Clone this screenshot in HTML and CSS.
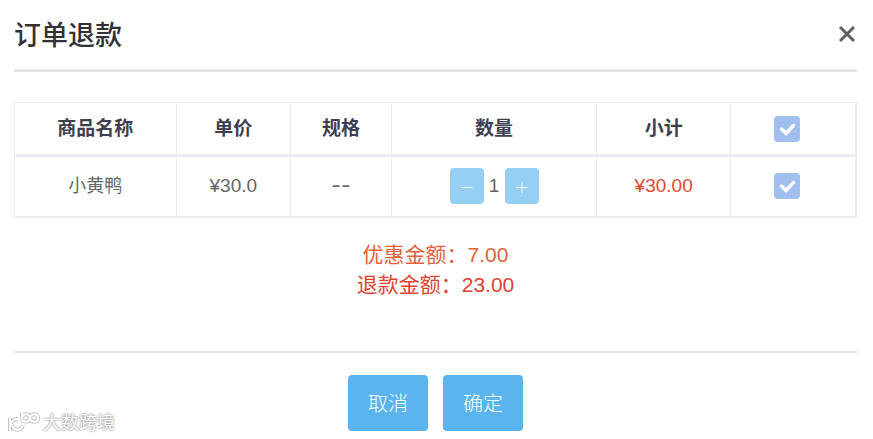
FILE: index.html
```html
<!DOCTYPE html>
<html lang="zh-CN">
<head>
    <meta charset="UTF-8">
    <meta name="viewport" content="width=device-width, initial-scale=1.0">
    <title>订单退款</title>
    <link rel="stylesheet" href="styles.css">
</head>
<body>
    <div class="dialog">
        <header class="dialog-header">
            <h1>订单退款</h1>
            <button type="button" class="close-button" aria-label="关闭">
                <svg width="20" height="20" viewBox="0 0 20 20"><path d="M3 3L17 17M17 3L3 17"/></svg>
            </button>
        </header>

        <table class="goods-table">
            <colgroup>
                <col class="col-name">
                <col class="col-price">
                <col class="col-spec">
                <col class="col-count">
                <col class="col-total">
                <col class="col-check">
            </colgroup>
            <thead>
                <tr>
                    <th>商品名称</th>
                    <th>单价</th>
                    <th>规格</th>
                    <th>数量</th>
                    <th>小计</th>
                    <th><input type="checkbox" id="checkAll" class="check" aria-label="全选" checked></th>
                </tr>
            </thead>
            <tbody>
                <tr>
                    <td class="name">小黄鸭</td>
                    <td>¥30.0</td>
                    <td class="spec">--</td>
                    <td>
                        <div class="stepper">
                            <button type="button" class="step-button" aria-label="减少">
                                <svg width="12" height="12" viewBox="0 0 12 12"><path d="M0.5 6.5H11.5"/></svg>
                            </button>
                            <span class="count">1</span>
                            <button type="button" class="step-button" aria-label="增加">
                                <svg width="12" height="12" viewBox="0 0 12 12"><path d="M0.5 6.5H11.5M6 1V12"/></svg>
                            </button>
                        </div>
                    </td>
                    <td class="total">¥30.00</td>
                    <td><input type="checkbox" class="check" aria-label="选择小黄鸭" checked></td>
                </tr>
            </tbody>
        </table>

        <div class="summary">
            <p class="discount">优惠金额：7.00</p>
            <p class="refund">退款金额：23.00</p>
        </div>

        <footer class="dialog-footer">
            <button type="button" class="action-button">取消</button>
            <button type="button" class="action-button">确定</button>
        </footer>
    </div>

    <div class="watermark">
        <svg width="34" height="24" viewBox="0 0 34 24">
            <g class="mark-shadow">
                <path d="M3 7V20M3 14C4 10 7 8 11 8M5 13C6 20 14 21 16 14"/>
                <path d="M15 2V7C15 12 22 12 23 7C24 2 31 2 31 7C31 12 24 12 23 7C22 2 16 2 15 7"/>
            </g>
            <g class="mark-line">
                <path d="M3 7V20M3 14C4 10 7 8 11 8M5 13C6 20 14 21 16 14"/>
                <path d="M15 2V7C15 12 22 12 23 7C24 2 31 2 31 7C31 12 24 12 23 7C22 2 16 2 15 7"/>
            </g>
        </svg>
        <span>大数跨境</span>
    </div>

    <script>
        const checkAll = document.getElementById('checkAll');
        const rowChecks = document.querySelectorAll('tbody .check');

        checkAll.addEventListener('change', function () {
            rowChecks.forEach(item => {
                item.checked = checkAll.checked;
            });
        });
    </script>
</body>
</html>
```

FILE: styles.css
```css
* {
    box-sizing: border-box;
}
body {
    margin: 0;
    background-color: #fff;
    color: #666;
    font-family: "Liberation Sans", "Noto Sans CJK SC", sans-serif;
}
button {
    padding: 0;
    border: none;
    font-family: inherit;
    cursor: pointer;
}
.dialog {
    padding: 0 16px 8px 14px;
}
.dialog-header {
    display: flex;
    align-items: center;
    justify-content: space-between;
    height: 72px;
    padding-bottom: 2px;
    border-bottom: 3px solid #e5e5e5;
}
h1 {
    margin: 0;
    font-size: 27px;
    font-weight: 500;
    color: #303238;
}
.close-button {
    display: flex;
    background: none;
}
.close-button path {
    fill: none;
    stroke: #606060;
    stroke-width: 3;
}
.goods-table {
    width: 100%;
    margin-top: 30px;
    table-layout: fixed;
    border-collapse: collapse;
    font-size: 19px;
    line-height: 24px;
    text-align: center;
}
.col-name {
    width: 19.2%;
}
.col-price {
    width: 13.6%;
}
.col-spec {
    width: 12%;
}
.col-count {
    width: 24.4%;
}
.col-total {
    width: 15.9%;
}
.col-check {
    width: 14.9%;
}
.goods-table th,
.goods-table td {
    padding: 0;
    border: 1px solid #e9eef0;
}
.goods-table th {
    height: 53px;
    border-bottom: 3px solid #e9edf1;
    color: #3d3f50;
    font-weight: bold;
}
.goods-table td {
    height: 61px;
    border-bottom: 2px solid #edf0f1;
}
.goods-table tr > :last-child {
    padding-right: 12px;
    border-right: 2px solid #e9eef0;
}
.goods-table .name {
    font-size: 18px;
}
.goods-table .spec {
    font-family: Inter, sans-serif;
    font-size: 21px;
}
.goods-table .total {
    color: #e0482f;
}
.check {
    display: block;
    width: 26px;
    height: 26px;
    margin: 0 auto;
    appearance: none;
    border-radius: 4px;
    background-color: #a0bfef;
    cursor: pointer;
}
.check:checked {
    background-image: url("data:image/svg+xml,%3Csvg xmlns='http://www.w3.org/2000/svg' viewBox='0 0 26 26'%3E%3Cpath d='M7.5 13L12 17.5L19.5 9.5' fill='none' stroke='white' stroke-width='3.5' stroke-linecap='round'/%3E%3C/svg%3E");
}
.stepper {
    display: flex;
    align-items: center;
    justify-content: center;
}
.count {
    width: 21px;
}
.step-button {
    display: flex;
    align-items: center;
    justify-content: center;
    width: 34px;
    height: 36px;
    padding-top: 2px;
    border-radius: 4px;
    background-color: #95cff4;
}
.step-button path {
    fill: none;
    stroke: #fff;
    stroke-width: 1;
}
.summary {
    margin-top: 22px;
    font-size: 21px;
    line-height: 30px;
    text-align: center;
}
.summary p {
    margin: 0;
}
.discount {
    color: #e2613b;
}
.refund {
    color: #df422f;
}
.dialog-footer {
    display: flex;
    justify-content: center;
    gap: 15px;
    margin-top: 51px;
    padding-top: 22px;
    border-top: 2px solid #e6e6e6;
}
.action-button {
    width: 80px;
    height: 56px;
    border-radius: 4px;
    background-color: #5ab5ee;
    color: #fff;
    font-size: 20px;
    font-weight: 300;
}
.watermark {
    position: absolute;
    left: 7px;
    bottom: 4px;
    display: flex;
    align-items: center;
    gap: 2px;
    color: #fff;
    font-size: 18px;
    line-height: 24px;
    text-shadow: 0 0 2px #888, 0 0 2px #aaa;
}
.watermark path {
    fill: none;
}
.mark-shadow {
    stroke: #c4c4c4;
    stroke-width: 4;
}
.mark-line {
    stroke: #fff;
    stroke-width: 2;
}
```
